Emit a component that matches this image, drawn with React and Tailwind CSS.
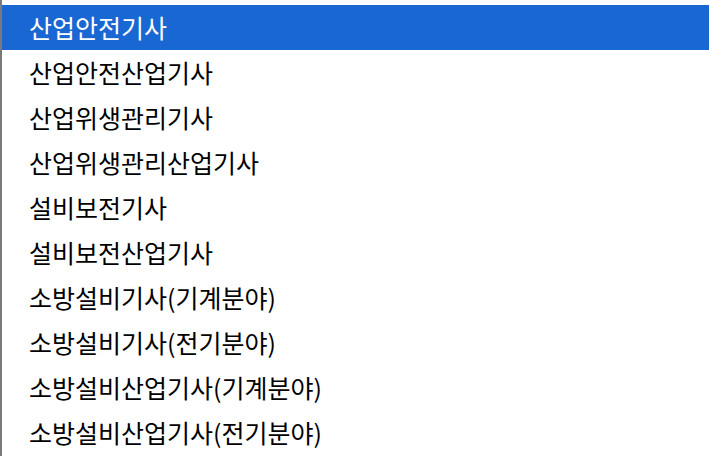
import React from 'react'

const items = [
  '산업안전기사',
  '산업안전산업기사',
  '산업위생관리기사',
  '산업위생관리산업기사',
  '설비보전기사',
  '설비보전산업기사',
  '소방설비기사(기계분야)',
  '소방설비기사(전기분야)',
  '소방설비산업기사(기계분야)',
  '소방설비산업기사(전기분야)',
]

function App() {
  const selected = 0

  return (
    <div className="h-[456px] w-[709px] overflow-hidden bg-white">
      <ul
        className="flex h-full flex-col border-l-2 border-[#7a7a7a] pt-[5px]"
        style={{ fontFamily: '"Noto Sans CJK KR", "Noto Sans", sans-serif' }}
      >
        {items.map((item, i) => (
          <li
            key={item}
            className={`flex h-[45px] shrink-0 items-center pl-[27px] text-[25px] leading-none ${
              i === selected ? 'bg-[#1967d2] text-white' : 'text-black'
            }`}
          >
            {item}
          </li>
        ))}
      </ul>
    </div>
  )
}

export default App
